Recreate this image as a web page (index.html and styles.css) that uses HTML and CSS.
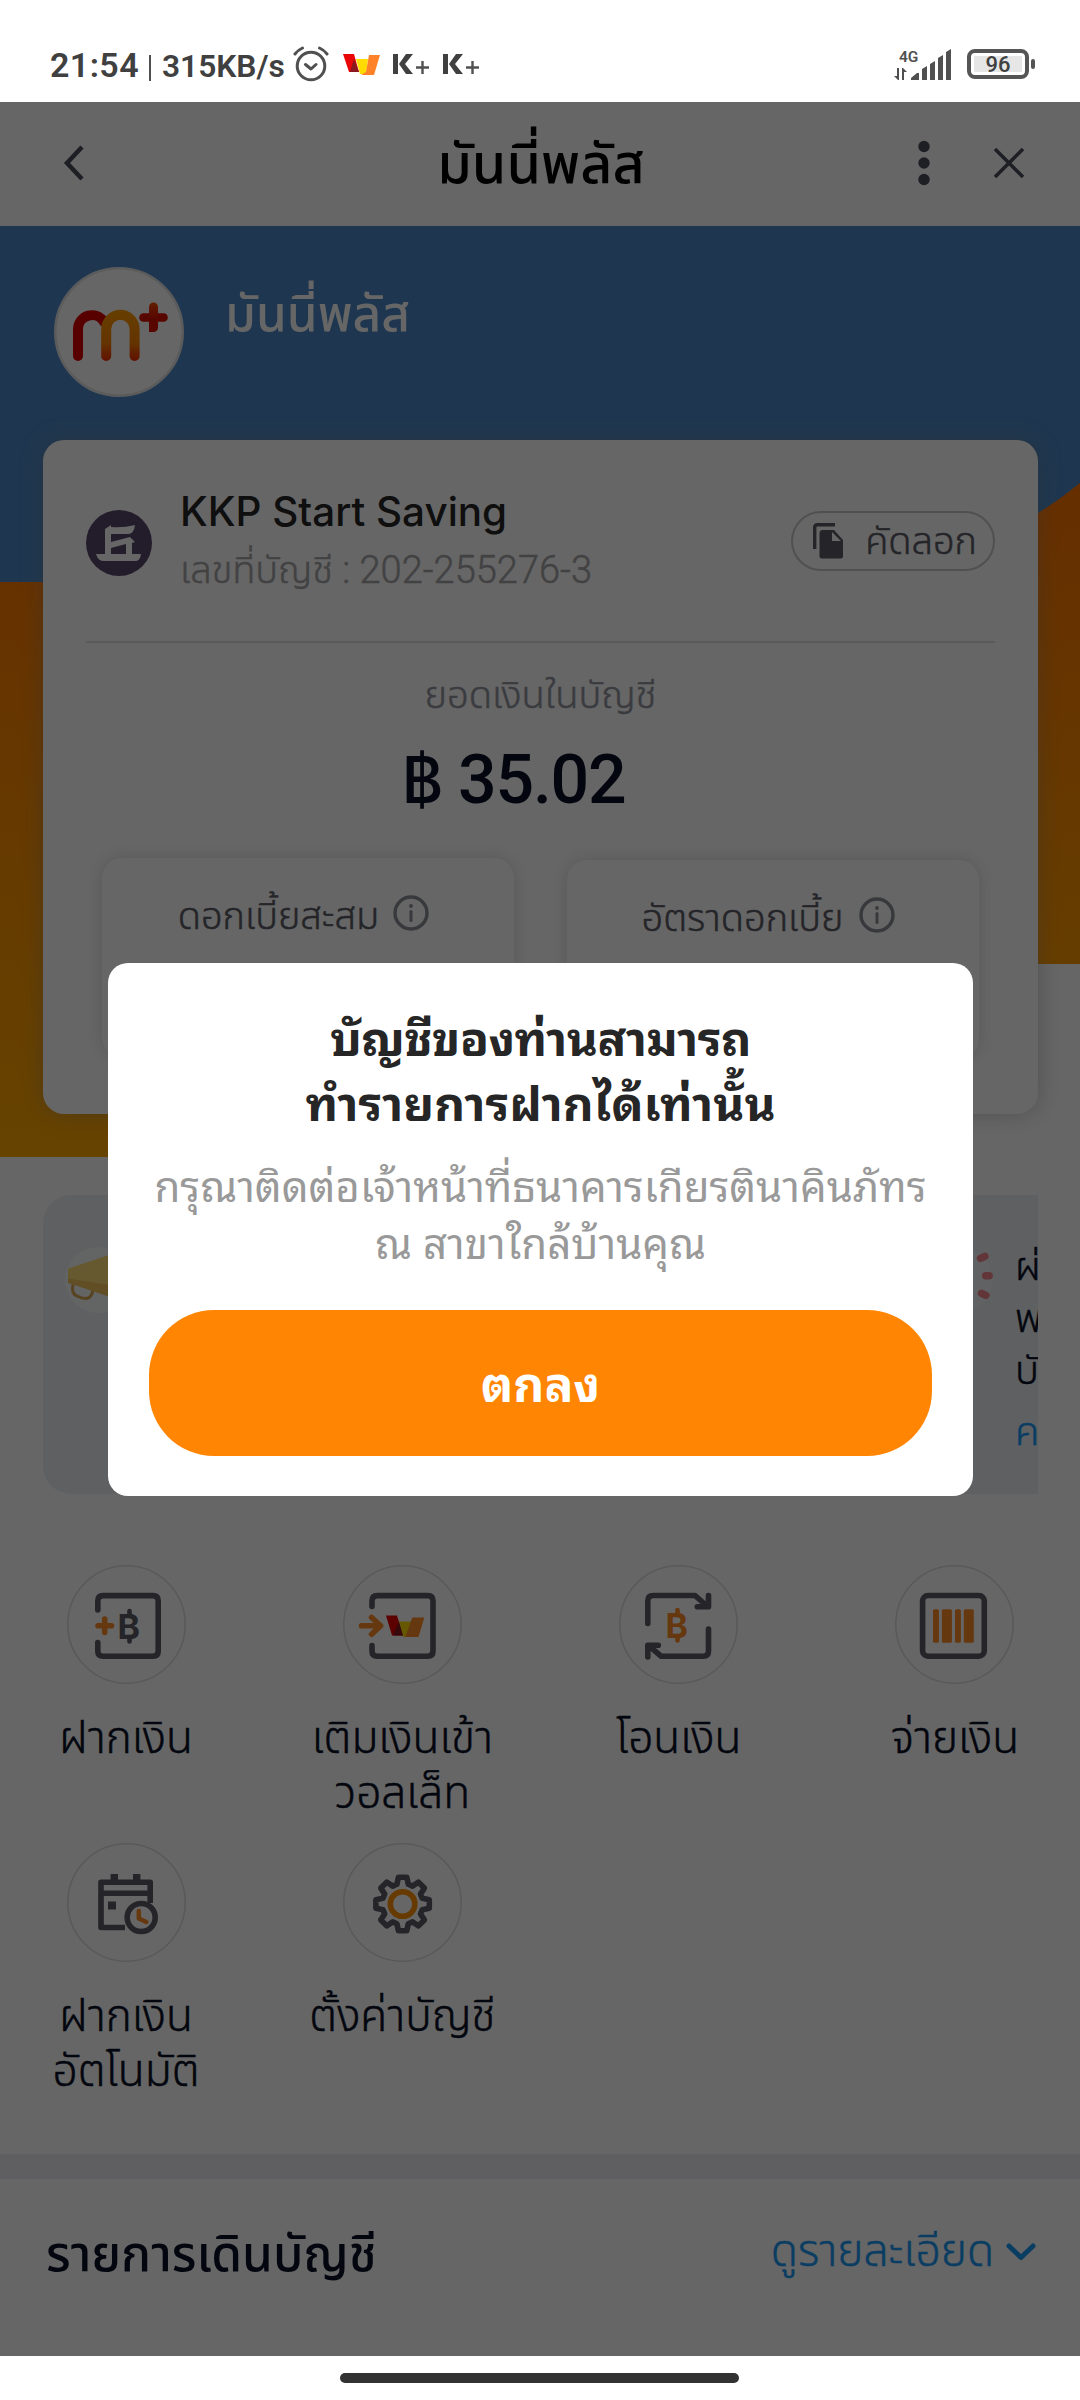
FILE: index.html
```html
<!DOCTYPE html>
<html lang="th">
<head>
<meta charset="utf-8">
<title>มันนี่พลัส</title>
<link rel="stylesheet" href="styles.css">
</head>
<body>
<div class="status">
  <span class="time">21:54</span><i class="sep"></i><span class="speed">315KB/s</span>
  <svg class="alarm" width="36" height="36" viewBox="0 0 36 36" fill="none" stroke="#505050" stroke-width="3" stroke-linecap="round" stroke-linejoin="round"><circle cx="18" cy="20" r="13.8"/><path d="M12.500 18.500l5.500 4.500 5-4.500M2 8q3-4 7.500-6M34 8q-3-4-7.500-6"/></svg>
  <svg class="wlogo" width="37" height="23" viewBox="0 0 37 23"><path fill="#e90606" d="M0 1h11l5 18H6z"/><path fill="#8a1620" d="M11 6l5 13H7z"/><path fill="#ffdb00" d="M13 6h12l-2 15h-6z"/><path fill="#ff8228" d="M26 2h11l-6 20H18l5-3z"/></svg>
  <svg class="kplus" width="37" height="22" viewBox="0 0 37 22"><path fill="#404040" d="M0 1h5v20H0zM13 1h7l-8 10 8 10h-7L6 11z"/><path stroke="#505050" stroke-width="2.400" d="M23 14.500h13M29.500 8v13"/></svg>
  <svg class="kplus" width="37" height="22" viewBox="0 0 37 22"><path fill="#404040" d="M0 1h5v20H0zM13 1h7l-8 10 8 10h-7L6 11z"/><path stroke="#505050" stroke-width="2.400" d="M23 14.500h13M29.500 8v13"/></svg>
  <svg class="signal" width="57" height="34" viewBox="0 0 57 34"><text x="5" y="12.500" font-size="15.500" font-weight="600" fill="#505050">4G</text><path fill="#505050" d="M17 31v-2l6-5h2v7zM28 31V20l5-3v14zM36 31V15l5-3v19zM44 31V9l5-3v25zM52 31V3l5-3v31zM3 19h2v12H4l-4-4h3zM8 19h1l4 4H10v8H8z"/></svg>
  <div class="battery"><span>96</span></div>
</div>

<div class="app">
  <div class="bar">
    <svg class="back" width="22" height="36" viewBox="0 0 22 36"><path d="M19 2L4 18l15 16" fill="none" stroke="#4d4f5c" stroke-width="4.500"/></svg>
    <h1>มันนี่พลัส</h1>
    <svg class="dots" width="14" height="46" viewBox="0 0 14 46" fill="#4d4f5c"><circle cx="7" cy="6.500" r="5.700"/><circle cx="7" cy="23" r="5.700"/><circle cx="7" cy="39.500" r="5.700"/></svg>
    <svg class="close" width="32" height="32" viewBox="0 0 32 32"><path d="M2 2l28 28M30 2L2 30" stroke="#4d4f5c" stroke-width="3.600"/></svg>
  </div>

  <div class="hero">
    <svg class="wave" width="1080" height="931" viewBox="0 0 1080 931">
      <defs><linearGradient id="sun" x1="0" y1="257" x2="0" y2="931" gradientUnits="userSpaceOnUse"><stop offset="0" stop-color="#ff7400"/><stop offset=".5" stop-color="#ff9000"/><stop offset="1" stop-color="#ffa800"/></linearGradient></defs>
      <path fill="#4b88c6" d="M0 0h1080v738H0z"/>
      <path fill="url(#sun)" d="M0 356h760q200 0 320-99v481H900v193H0z"/>
    </svg>
    <div class="profile">
      <svg class="avatar" width="130" height="130" viewBox="0 0 130 130" fill="none" stroke-linecap="round">
        <defs>
          <linearGradient id="amber" x1="0" y1="43" x2="0" y2="94" gradientUnits="userSpaceOnUse"><stop offset="0" stop-color="#ff9d00"/><stop offset=".65" stop-color="#fb8200"/><stop offset="1" stop-color="#f22a00"/></linearGradient>
          <linearGradient id="cross" x1="0" y1="36" x2="0" y2="52" gradientUnits="userSpaceOnUse"><stop offset="0" stop-color="#f24a00"/><stop offset="1" stop-color="#dc1000"/></linearGradient>
        </defs>
        <circle cx="65" cy="65" r="63.700" fill="#fff" stroke="#e3e4e6" stroke-width="2.600"/>
        <path stroke="#dc0000" stroke-width="10" d="M24 89V62a14 14 0 0 1 26-7"/>
        <path stroke="url(#amber)" stroke-width="10" d="M52.200 89V62a14.200 14.200 0 0 1 28.400 0v27"/>
        <path stroke="#dc1000" stroke-width="8.600" d="M89.500 50.500h20"/>
        <path stroke="url(#cross)" stroke-width="9" d="M99.500 40v20.500h.01"/>
      </svg>
      <h2>มันนี่พลัส</h2>
    </div>

    <section class="card">
      <div class="account">
        <svg class="bank" width="66" height="66" viewBox="0 0 66 66"><circle cx="33" cy="33" r="33" fill="#55466c"/><path fill="#fff" d="M19 19l6-4v2q12 1 24-2-1 9-7 9H25v8l19-5 5 5-3 1v11h9q-1 7-5 7H17q-5 0-7-7h9zM25 38v6h15V34z"/></svg>
        <div class="account-text">
          <div class="account-name">KKP Start Saving</div>
          <div class="account-no light">เลขที่บัญชี : 202-255276-3</div>
        </div>
        <div class="copy light"><svg width="31" height="36" viewBox="0 0 31 36"><path d="M1.700 26V4.500q0-2.800 2.800-2.800H22" fill="none" stroke="#5a5b66" stroke-width="3.400"/><path fill="#5a5b66" fill-rule="evenodd" d="M10 7h11l9 10v16a2.500 2.500 0 0 1-2.500 2.500H9A2.500 2.500 0 0 1 6.500 33V10A3 3 0 0 1 10 7zM19 9v9h9z"/></svg><span>คัดลอก</span></div>
      </div>
      <div class="balance-label light">ยอดเงินในบัญชี</div>
      <div class="balance"><span class="currency">฿</span> 35.02</div>
      <div class="tiles">
        <div class="tile light"><span>ดอกเบี้ยสะสม</span><svg width="36" height="36" viewBox="0 0 36 36"><circle cx="18" cy="18" r="16" fill="none" stroke="#8c8e98" stroke-width="3.400"/><path d="M18 16.500v9" stroke="#8c8e98" stroke-width="3" stroke-linecap="round"/><circle cx="18" cy="11" r="1.900" fill="#8c8e98"/></svg></div>
        <div class="tile rate light"><span>อัตราดอกเบี้ย</span><svg width="36" height="36" viewBox="0 0 36 36"><circle cx="18" cy="18" r="16" fill="none" stroke="#8c8e98" stroke-width="3.400"/><path d="M18 16.500v9" stroke="#8c8e98" stroke-width="3" stroke-linecap="round"/><circle cx="18" cy="11" r="1.900" fill="#8c8e98"/></svg></div>
      </div>
    </section>
  </div>

  <section class="promo">
    <svg class="horn" width="66" height="66" viewBox="0 0 66 66"><circle cx="33" cy="33" r="33" fill="#fff" opacity=".6"/><path d="M8 37q-2 10 4 12 14 7 16-6" fill="none" stroke="#d9a84e" stroke-width="3"/><path fill="#ffdf78" d="M3 21.700L48 6.500v43L3 35.700z"/><path fill="#f2c25e" d="M3 31.500l45 7V51L3 35.700z"/></svg>
    <svg class="rays" width="66" height="66" viewBox="0 0 66 66"><circle cx="33" cy="33" r="33" fill="#fff" opacity=".3"/><g stroke="#f58890" stroke-width="7.500" stroke-linecap="round"><path d="M53.500 11.300l4.400-2M58.700 28.700h3.500M54.500 46.300l4.400 2"/></g></svg>
    <div class="promo-text light"><div>ผ่</div><div>พ</div><div>บั</div><a>ค</a></div>
  </section>

  <div class="actions">
    <div class="action"><svg width="119" height="119" viewBox="0 0 119 119"><circle class="ring" cx="59.500" cy="59.500" r="58.700"/><path class="ink" d="M30.800 45V36q0-5.400 5.400-5.400H86q5.200 0 5.200 5.400v50q0 5.200-5.200 5.200H36.200q-5.400 0-5.400-5.200v-8.500"/><path class="sun" d="M31 60.700h13.500M37.700 54v13.500"/><text class="baht" x="50.500" y="74">B</text><path class="stub" d="M62.500 46v5M62.500 72v4.500"/></svg><p class="light">ฝากเงิน</p></div>
    <div class="action"><svg width="119" height="119" viewBox="0 0 119 119"><circle class="ring" cx="59.500" cy="59.500" r="58.700"/><path class="ink" d="M29 41.500V36q0-5.400 5.400-5.400H84.800q5.200 0 5.200 5.400v50q0 5.200-5.200 5.200H34.400q-5.400 0-5.400-5.200v-5.400"/><path class="sun" d="M18.500 60.700H37M28.600 52.500l9 8.200-9 8.500"/><path fill="#e60000" d="M43 50.400h11l6 20H49z"/><path fill="#8a1620" d="M56 56l4.500 14.400H50z"/><path fill="#ffdc00" d="M56 56.400h14L64 72h-3.500z"/><path fill="#ff8c26" d="M69.300 52.500h12L75.500 72H62.300z"/></svg><p class="light">เติมเงินเข้า<br>วอลเล็ท</p></div>
    <div class="action"><svg width="119" height="119" viewBox="0 0 119 119"><circle class="ring" cx="59.500" cy="59.500" r="58.700"/><path class="ink" d="M28.800 58.500V36q0-5.500 5.400-5.500H76l12.500 11M89.500 30.500v11.200H78.300M89.500 64v22q0 5.200-5.400 5.200H42L30 80.800M28.800 92V80.300h10.500"/><text class="baht orange" x="46.500" y="73">B</text><path class="stub orange" d="M58.500 45v5M58.500 71v4.500"/></svg><p class="light">โอนเงิน</p></div>
    <div class="action"><svg width="119" height="119" viewBox="0 0 119 119"><circle class="ring" cx="59.500" cy="59.500" r="58.700"/><rect class="ink" x="27.600" y="30.500" width="61.700" height="60.700" rx="5.500"/><g fill="#ff8c26"><rect x="38" y="44.300" width="5.900" height="33.400" rx="1.500"/><rect x="46.900" y="44.300" width="10" height="33.400" rx="1.500"/><rect x="60" y="44.300" width="5.900" height="33.400" rx="1.500"/><rect x="68.800" y="44.300" width="10" height="33.400" rx="1.500"/></g></svg><p class="light">จ่ายเงิน</p></div>
    <div class="action"><svg width="119" height="119" viewBox="0 0 119 119"><circle class="ring" cx="59.500" cy="59.500" r="58.700"/><path class="ink square" d="M58 84.500H34V39.300h49.200V60M34 50.200h49"/><path fill="#5a5b66" d="M43.600 31h7.400v8h-7.400zM66 31h7.400v8H66zM41 58.400h8v8h-8z"/><circle class="ink" cx="74.200" cy="74.500" r="14"/><path class="sun thin" d="M71.800 68v7.500l7.500 3.500"/></svg><p class="light">ฝากเงิน<br>อัตโนมัติ</p></div>
    <div class="action"><svg width="119" height="119" viewBox="0 0 119 119"><circle class="ring" cx="59.500" cy="59.500" r="58.700"/><g transform="translate(59.600 61)"><path class="ink" d="M26.700-4.200V4.200L19.700 5.700 17.900 9.900 21.800 15.900 15.900 21.800 9.900 17.900 5.700 19.700 4.200 26.700H-4.200L-5.700 19.700-9.900 17.900-15.900 21.800-21.800 15.900-17.900 9.900-19.700 5.700-26.700 4.200V-4.200L-19.700-5.700-17.900-9.900-21.800-15.900-15.900-21.800-9.900-17.900-5.700-19.700-4.200-26.700H4.200L5.700-19.700 9.900-17.900 15.900-21.800 21.800-15.900 17.900-9.900 19.700-5.700z"/><circle r="12.300" fill="none" stroke="#ff9100" stroke-width="5.500"/></g></svg><p class="light">ตั้งค่าบัญชี</p></div>
  </div>

  <section class="statement">
    <h3>รายการเดินบัญชี</h3>
    <a class="light"><span>ดูรายละเอียด</span><svg width="30" height="18" viewBox="0 0 30 18"><path d="M3 3l12 11.500L27 3" fill="none" stroke="#1b98f5" stroke-width="5" stroke-linecap="round" stroke-linejoin="round"/></svg></a>
  </section>

  <div class="scrim">
    <div class="dialog">
      <h4><span class="tight">บัญชีของท่านสามารถ</span><br>ทำรายการฝากได้เท่านั้น</h4>
      <p>กรุณาติดต่อเจ้าหน้าที่ธนาคารเกียรตินาคินภัทร<br>ณ สาขาใกล้บ้านคุณ</p>
      <button>ตกลง</button>
    </div>
  </div>
</div>
<div class="nav"><i></i></div>
</body>
</html>
```
FILE: styles.css
```css
* { box-sizing: border-box; margin: 0; padding: 0; }
body { width: 1080px; height: 2400px; display: flex; flex-direction: column; overflow: hidden; background: #fff; font-family: Inter, "Noto Sans Thai", sans-serif; white-space: nowrap; }
svg { flex: none; display: block; }
h1, h2, h3, h4 { font-weight: 500; }
.light { font-weight: 300; -webkit-text-stroke: .5px currentColor; }

.status { height: 102px; flex: none; display: flex; align-items: flex-start; padding: 46px 45px 0 50px; font-family: Roboto, sans-serif; color: #404040; }
.time { font-size: 34px; line-height: 39px; font-weight: 600; letter-spacing: .4px; }
.sep { width: 2px; height: 26px; background: #505050; margin: 9px 11px 0 10px; }
.speed { font-size: 31.7px; line-height: 41px; font-weight: 600; width: 131px; }
.wlogo { margin: 7px 0 0 14px; }
.kplus { margin: 7px 0 0 13px; }
.signal { margin: 3px 16px 0 auto; }
.battery { position: relative; width: 62px; height: 30px; margin: 3px 6px 0 0; border: 4px solid #555; border-radius: 8px; background: #e6e6e6; box-shadow: inset 0 0 0 3px #fff; font-size: 22px; line-height: 24px; font-weight: 500; text-align: center; }
.battery::after { content: ""; position: absolute; right: -10px; top: 6px; width: 4px; height: 10px; border-radius: 2px; background: #555; }

.app { position: relative; height: 2254px; flex: none; overflow: hidden; }
.bar { height: 124px; display: flex; align-items: center; padding: 0 55px 2px 63px; }
.bar h1 { flex: 1; text-align: center; font-size: 55.6px; line-height: 124px; color: #000; padding-left: 80px; }
.dots { margin-right: 62px; }

.hero { position: relative; padding: 41px 42px 0 43px; }
.wave { position: absolute; left: 0; top: 0; }
.profile { position: relative; display: flex; gap: 41px; padding-left: 11px; height: 173px; }
.profile h2 { font-size: 49.6px; line-height: 92px; color: #fff; }

.card { position: relative; height: 674px; padding: 44px 43px 0; border-radius: 21px; background: #fff; box-shadow: 0 0 22px rgba(130, 130, 130, .45); }
.account { display: flex; align-items: center; height: 159px; padding-bottom: 43px; border-bottom: 2px solid #e1e2e6; }
.bank { margin-top: 4px; }
.account-text { flex: 1; padding: 1px 0 0 28px; line-height: 59px; }
.account-name { font-size: 40.4px; font-weight: 500; color: #262626; line-height: 58px; }
.account-no { font-family: Roboto, "Noto Sans Thai", sans-serif; font-size: 38px; color: #a5a5a8; }
.copy { display: flex; align-items: center; width: 204px; height: 60px; padding: 0 16px 0 20px; border: 2px solid #c6c8cc; border-radius: 30px; font-size: 38px; color: #5a5b66; justify-content: space-between; margin-top: -1px; }
.copy span { padding-top: 4px; }
.balance-label { margin-top: 21px; text-align: center; font-size: 38.2px; line-height: 60px; color: #92949e; }
.balance { margin-top: 6px; padding-right: 54px; text-align: center; font-family: Roboto, sans-serif; font-size: 68px; line-height: 100px; font-weight: 500; color: #080f26; letter-spacing: -1.2px; }
.currency { font-family: Inter, sans-serif; font-size: 64px; }
.tiles { display: flex; justify-content: space-between; align-items: flex-start; padding: 0 16px; margin-top: 28px; }
.tile { width: 412px; height: 199px; padding: 27px 9px 0 0; display: flex; justify-content: center; gap: 14px; border-radius: 20px; background: #fff; box-shadow: 0 0 16px rgba(90, 90, 100, .22); font-size: 38px; line-height: 60px; color: #5a5b66; }
.tile svg { margin-top: 10px; }
.rate { margin-top: 2px; gap: 16px; }

.promo { display: flex; position: relative; height: 299px; margin: 81px 42px 0 43px; padding: 52px 0 0 22px; border-radius: 28px 0 0 28px; overflow: hidden; background: #ecf0f6; }
.rays { margin-left: 796px; }
.promo-text { margin-left: 22px; font-size: 40px; line-height: 52px; margin-top: -7px; color: #080f26; }
.promo-text a { display: block; margin-top: 9px; color: #1b98f5; }

.actions { display: grid; grid-template-columns: repeat(4, 190px); justify-content: space-between; row-gap: 21px; padding: 0 30px 0 31px; margin-top: 71px; }
.action { display: flex; flex-direction: column; align-items: center; gap: 26px; }
.action p { min-height: 112px; text-align: center; font-size: 44.2px; line-height: 55px; color: #080f26; }
.ring { fill: none; stroke: #dedfe6; stroke-width: 1.6px; }
.ink { fill: none; stroke: #5a5b66; stroke-width: 5.6px; stroke-linecap: round; stroke-linejoin: round; }
.square { stroke-linecap: butt; }
.sun { fill: none; stroke: #ff8c26; stroke-width: 5.6px; stroke-linecap: round; stroke-linejoin: round; }
.thin { stroke-width: 4.5px; }
.baht { font: 700 34px Inter, sans-serif; fill: #5a5b66; }
.stub { stroke: #5a5b66; stroke-width: 4.6px; stroke-linecap: round; }
.baht.orange { fill: #ff8c26; }
.stub.orange { stroke: #ff8c26; }

.statement { display: flex; justify-content: space-between; height: 202px; margin-top: 54px; padding: 0 44px 0 46px; border-top: 25px solid #eeeef4; color: #080f26; }
.statement h3 { font-size: 49.6px; line-height: 149px; }
.statement a { display: flex; align-items: center; gap: 12px; height: 146px; font-size: 44.4px; color: #1b98f5; }

.scrim { position: absolute; inset: 0; background: rgba(0, 0, 0, .6); }
.dialog { width: 865px; height: 533px; margin: 861px auto 0 108px; padding: 39px 30px 0; border-radius: 20px; background: #fff; text-align: center; font-family: "Noto Sans Thai Looped", "Noto Sans Thai", sans-serif; }
.dialog h4 { font-size: 47.7px; line-height: 65px; font-weight: 700; color: #262626; }
.tight { letter-spacing: -.5px; }
.dialog p { margin-top: 23px; font-size: 42px; line-height: 57px; color: #999; }
.dialog button { display: block; width: 783px; height: 146px; margin: 41px 0 0 11px; border: 0; border-radius: 65px; background: #ff8503; color: #fff; font: 700 48px/142px "Noto Sans Thai Looped", "Noto Sans Thai", sans-serif; padding-bottom: 4px; }

.nav { flex: 1; display: flex; justify-content: center; padding: 17px 1px 0 0; }
.nav i { width: 399px; height: 10px; border-radius: 5px; background: #323232; }
```
